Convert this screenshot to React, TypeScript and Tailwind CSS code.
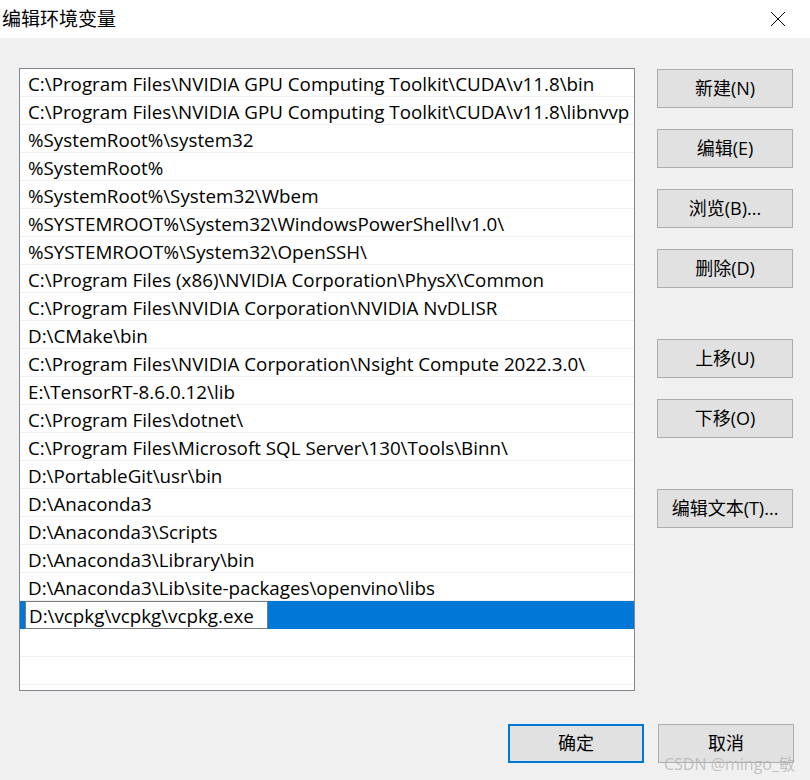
const paths = [
  "C:\\Program Files\\NVIDIA GPU Computing Toolkit\\CUDA\\v11.8\\bin",
  "C:\\Program Files\\NVIDIA GPU Computing Toolkit\\CUDA\\v11.8\\libnvvp",
  "%SystemRoot%\\system32",
  "%SystemRoot%",
  "%SystemRoot%\\System32\\Wbem",
  "%SYSTEMROOT%\\System32\\WindowsPowerShell\\v1.0\\",
  "%SYSTEMROOT%\\System32\\OpenSSH\\",
  "C:\\Program Files (x86)\\NVIDIA Corporation\\PhysX\\Common",
  "C:\\Program Files\\NVIDIA Corporation\\NVIDIA NvDLISR",
  "D:\\CMake\\bin",
  "C:\\Program Files\\NVIDIA Corporation\\Nsight Compute 2022.3.0\\",
  "E:\\TensorRT-8.6.0.12\\lib",
  "C:\\Program Files\\dotnet\\",
  "C:\\Program Files\\Microsoft SQL Server\\130\\Tools\\Binn\\",
  "D:\\PortableGit\\usr\\bin",
  "D:\\Anaconda3",
  "D:\\Anaconda3\\Scripts",
  "D:\\Anaconda3\\Library\\bin",
  "D:\\Anaconda3\\Lib\\site-packages\\openvino\\libs",
];

const font = {
  fontFamily: '"Open Sans", "Noto Sans CJK SC", sans-serif',
};

const Btn = ({ label, primary }: { label: string; primary?: boolean }) => (
  <div
    className={
      "flex h-[39px] w-[136px] items-center justify-center bg-[#e1e1e1] text-[18px] text-black " +
      (primary ? "border-2 border-[#0078d7]" : "border border-[#adadad]")
    }
  >
    {label}
  </div>
);

export default function App() {
  return (
    <div
      className="flex h-[780px] w-[810px] flex-col overflow-hidden bg-[#f0f0f0]"
      style={font}
    >
      <div className="flex h-[38px] shrink-0 items-center justify-between bg-white pl-[2px] pr-[24px]">
        <span className="text-[19px] text-black">编辑环境变量</span>
        <svg width="16" height="16" viewBox="0 0 16 16">
          <path d="M1 1 L15 15 M15 1 L1 15" stroke="#000" strokeWidth="1" />
        </svg>
      </div>

      <div className="flex pl-[19px] pt-[30px]">
        <div className="flex h-[623px] w-[616px] flex-col border border-[#828790] bg-white">
          {paths.map((p) => (
            <div
              key={p}
              className="flex h-[28px] shrink-0 items-center whitespace-nowrap border-b border-[#f0f0f0] pl-[8px] pt-[3px] text-[18.8px] text-black"
            >
              {p}
            </div>
          ))}
          <div className="flex h-[28px] shrink-0 items-center bg-[#0078d7]">
            <div className="ml-[5px] flex h-[28px] w-[243px] shrink-0 items-center border border-[#7a7a7a] bg-white pl-[3px] pt-[3px] text-[18.8px] text-black">
              D:\vcpkg\vcpkg\vcpkg.exe
            </div>
          </div>
          <div className="h-[28px] shrink-0 border-b border-[#f0f0f0]" />
          <div className="h-[28px] shrink-0 border-b border-[#f0f0f0]" />
        </div>

        <div className="ml-[22px] flex flex-col pt-[1px]">
          <div className="flex flex-col gap-[21px]">
            <Btn label="新建(N)" />
            <Btn label="编辑(E)" />
            <Btn label="浏览(B)..." />
            <Btn label="删除(D)" />
          </div>
          <div className="mt-[51px] flex flex-col gap-[21px]">
            <Btn label="上移(U)" />
            <Btn label="下移(O)" />
          </div>
          <div className="mt-[51px]">
            <Btn label="编辑文本(T)..." />
          </div>
        </div>
      </div>

      <div className="mt-[33px] flex justify-end gap-[14px] pr-[16px]">
        <Btn label="确定" primary />
        <div className="relative">
          <Btn label="取消" />
          <span className="absolute right-[-1px] top-[28px] whitespace-nowrap text-[16px] text-[#b4b4b4]/80">
            CSDN @mingo_敏
          </span>
        </div>
      </div>
    </div>
  );
}
